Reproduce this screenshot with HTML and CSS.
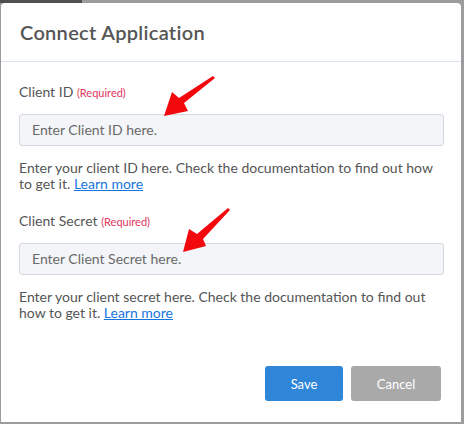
FILE: index.html
```html
<!DOCTYPE html>
<html>
<head>
<meta charset="utf-8">
<link rel="stylesheet" href="styles.css">
</head>
<body>
<div class="strip"><div class="strip-dark"></div></div>
<div class="frame">
  <div class="modal">
    <div class="modal-header">
      <h1 class="title">Connect Application</h1>
    </div>
    <div class="modal-body">
      <div class="field">
        <label class="label">Client ID <span class="req">(Required)</span></label>
        <div class="input">Enter Client ID here.</div>
        <p class="help">Enter your client ID here. Check the documentation to find out how to get it. <a class="link" href="#">Learn more</a></p>
      </div>
      <div class="field field-second">
        <label class="label">Client Secret <span class="req">(Required)</span></label>
        <div class="input">Enter Client Secret here.</div>
        <p class="help">Enter your client secret here. Check the documentation to find out how to get it. <a class="link" href="#">Learn more</a></p>
      </div>
    </div>
    <div class="modal-footer">
      <button class="btn btn-save">Save</button>
      <button class="btn btn-cancel">Cancel</button>
    </div>
    <svg class="arrow arrow-1" width="60" height="50" viewBox="0 0 60 50">
      <path d="M51 0 L53 2 L22 27 L26 35 L2 40 L10 16 L17 22 Z" fill="#f2080d"/>
    </svg>
    <svg class="arrow arrow-2" width="60" height="50" viewBox="0 0 60 50">
      <path d="M47 0 L49 2 L22 31 L25 38 L2 44 L8 21 L16 26 Z" fill="#f2080d"/>
    </svg>
  </div>
</div>
</body>
</html>
```

FILE: styles.css
```css
html, body {
  margin: 0;
  padding: 0;
}
body {
  width: 464px;
  height: 424px;
  background: #9c9c9c;
  font-family: "Lato", "Open Sans", sans-serif;
  overflow: hidden;
}
.strip {
  height: 3px;
  display: flex;
}
.strip-dark {
  width: 82px;
  background: #4f4f4f;
}
.frame {
  padding: 0 3px 0 1px;
}
.modal {
  position: relative;
  background: #fff;
  height: 419px;
  border-radius: 4px 4px 0 0;
  display: flex;
  flex-direction: column;
}
.modal-header {
  height: 58px;
  border-bottom: 1px solid #d9e2f4;
  display: flex;
  align-items: center;
  padding-left: 19px;
}
.title {
  margin: 0;
  font-size: 20px;
  font-weight: 600;
  color: #555;
  letter-spacing: 0.3px;
}
.modal-body {
  padding: 0 17px 0 18px;
  flex: 1;
}
.field {
  padding-top: 21px;
}
.field-second {
  padding-top: 20px;
}
.label {
  display: block;
  font-size: 14px;
  color: #555;
  line-height: 18px;
}
.req {
  font-size: 11px;
  color: #e0355e;
}
.input {
  margin-top: 12px;
  height: 30px;
  border: 1px solid #d3d8de;
  border-radius: 3px;
  background: #f3f5f8;
  font-size: 14px;
  color: #6a6a6a;
  line-height: 30px;
  padding-left: 12px;
}
.help {
  margin: 14px 0 0;
  font-size: 14px;
  line-height: 16px;
  color: #555;
}
.link {
  color: #1675e0;
  text-decoration: underline;
}
.modal-footer {
  display: flex;
  justify-content: flex-end;
  gap: 8px;
  padding: 0 20px 21px 0;
}
.btn {
  height: 35px;
  border: 0;
  border-radius: 3px;
  color: #fff;
  font-family: "Lato", "Open Sans", sans-serif;
  font-size: 13px;
  padding: 0;
}
.btn-save {
  width: 78px;
  background: #2f86d8;
}
.btn-cancel {
  width: 90px;
  background: #a9a9a9;
}
.arrow {
  position: absolute;
}
.arrow-1 {
  left: 161px;
  top: 73px;
}
.arrow-2 {
  left: 180px;
  top: 205px;
}
```
